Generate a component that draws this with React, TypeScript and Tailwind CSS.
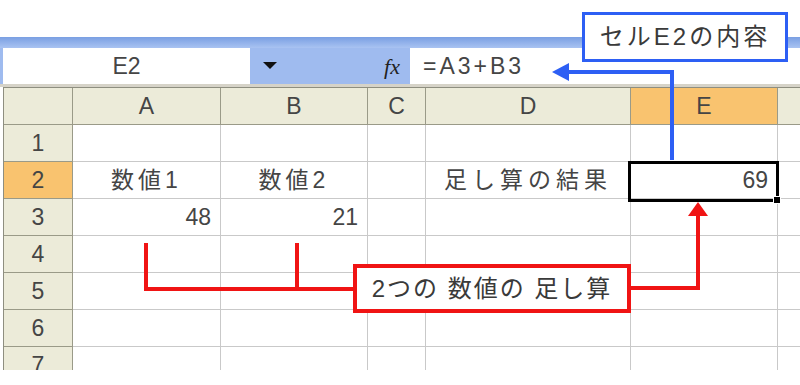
import React from "react";

const cols = [
  { w: 148, label: "A" },
  { w: 147, label: "B" },
  { w: 58, label: "C" },
  { w: 205, label: "D" },
  { w: 147, label: "E", sel: true },
];

type Cell = { text?: string; align?: "left" | "right" | "center"; jp?: string };

const data: Record<number, Record<number, Cell>> = {
  2: {
    0: { text: "数値1", align: "center", jp: "tracking-[4px]" },
    1: { text: "数値2", align: "center", jp: "tracking-[4px]" },
    3: { text: "足し算の結果", align: "center", jp: "tracking-[5px]" },
    4: { text: "69", align: "right" },
  },
  3: {
    0: { text: "48", align: "right" },
    1: { text: "21", align: "right" },
  },
};

export default function App() {
  const rows = [1, 2, 3, 4, 5, 6, 7];
  return (
    <div
      className="relative w-[800px] h-[385px] overflow-hidden bg-white text-[#454545]"
      style={{ fontFamily: '"Liberation Sans", "Noto Sans CJK JP", sans-serif' }}
    >
      <div className="h-[37px]" />
      {/* Formula bar */}
      <div className="flex flex-col">
        <div className="h-[11px] bg-gradient-to-b from-[#7a9fe2] to-[#a9c3f2]" />
        <div className="flex h-[36px] bg-[#9fbbef] pl-[3px]">
          <div className="w-[247px] bg-white flex items-center justify-center text-[23px]">E2</div>
          <div className="w-[160px] flex items-center">
            <svg width="14" height="8" className="ml-[13px]" viewBox="0 0 14 8">
              <path d="M0 0 L14 0 L7 7 Z" fill="#111" />
            </svg>
            <span
              className="ml-auto mr-[10px] text-[22px] italic text-[#222]"
              style={{ fontFamily: '"Liberation Serif", serif' }}
            >
              <i>f</i>x
            </span>
          </div>
          <div className="flex-1 bg-white flex items-center pl-[13px] text-[23px] tracking-[3px]">=A3+B3</div>
        </div>
        <div className="h-[3px] bg-[#d6d3c8]" />
      </div>
      {/* Sheet */}
      <div className="pl-[3px]">
        <div
          className="grid border-l border-t border-[#8e8e80]"
          style={{ gridTemplateColumns: "69px 148px 147px 58px 205px 147px 1fr", gridAutoRows: "37px" }}
        >
          {/* Header row */}
          <div className="bg-[#ecebd9] border-r border-b border-[#9a9a88]" />
          {cols.map((c) => (
            <div
              key={c.label}
              className={`flex items-center justify-center text-[23px] border-r border-b border-[#9a9a88] ${
                c.sel ? "bg-[#f9c36f]" : "bg-[#ecebd9]"
              }`}
            >
              {c.label}
            </div>
          ))}
          <div className="bg-[#ecebd9] border-b border-[#9a9a88]" />
          {rows.map((r) => (
            <React.Fragment key={r}>
              <div
                className={`flex items-center justify-center text-[23px] border-r border-b border-[#9a9a88] ${
                  r === 2 ? "bg-[#f9c36f]" : "bg-[#ecebd9]"
                }`}
              >
                {r}
              </div>
              {cols.map((c, ci) => {
                const cell = data[r]?.[ci];
                return (
                  <div
                    key={c.label}
                    className={`flex items-center border-r border-b border-[#c9c9c9] text-[23px] px-[9px] ${
                      cell?.align === "right" ? "justify-end" : "justify-center"
                    } ${cell?.jp ?? ""}`}
                  >
                    {cell?.text}
                  </div>
                );
              })}
              <div className="border-b border-[#c9c9c9]" />
            </React.Fragment>
          ))}
        </div>
      </div>
      {/* Bottom white cover */}
      <div className="absolute left-0 right-0 top-[370px] h-[15px] bg-white" />

      {/* Selection box E2 */}
      <div className="absolute left-[628px] top-[161px] w-[151px] h-[41px] border-[3px] border-black" />
      <div className="absolute left-[773px] top-[196px] w-[8px] h-[8px] bg-black border border-white" />

      {/* Arrows */}
      <svg className="absolute left-0 top-0 pointer-events-none" width="800" height="385">
        <path d="M567 72 L672 72 L672 160" fill="none" stroke="#2d5ff4" strokeWidth="4" />
        <path d="M552 72 L569 63 L569 81 Z" fill="#2d5ff4" />
        <path d="M146 243 L146 289 L354 289" fill="none" stroke="#f01414" strokeWidth="4" />
        <path d="M297 243 L297 289" fill="none" stroke="#f01414" strokeWidth="4" />
        <path d="M629 288 L698 288 L698 214" fill="none" stroke="#f01414" strokeWidth="4" />
        <path d="M698 202 L688 216 L708 216 Z" fill="#f01414" />
      </svg>

      {/* Callouts */}
      <div className="absolute left-[582px] top-[12px] w-[206px] h-[50px] border-[3px] border-[#2d5ff4] bg-white flex items-center justify-center text-[24px] tracking-[3px] text-[#3a3a3a]">
        セルE2の内容
      </div>
      <div className="absolute left-[353px] top-[264px] w-[278px] h-[49px] border-[4px] border-[#f01414] bg-white flex items-center justify-center text-[24px] tracking-[2px] text-[#3a3a3a] whitespace-pre">
        2つの 数値の 足し算
      </div>
    </div>
  );
}
